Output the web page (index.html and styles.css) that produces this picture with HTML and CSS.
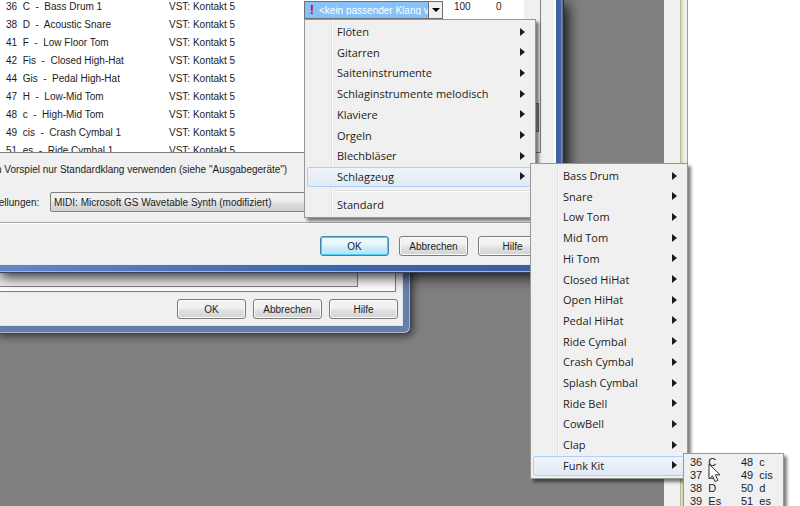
FILE: index.html
```html
<!DOCTYPE html>
<html lang="de">
<head>
	<meta charset="utf-8">
	<title>Klangzuordnung</title>
	<link rel="stylesheet" href="styles.css">
</head>
<body>

	<div class="desktop">

		<div class="side-panel">
			<div class="side-strip"></div>
			<div class="side-page"></div>
		</div>

		<div class="window window-back">
			<div class="window-body">
				<div class="frame-box"><div class="frame-inner"></div></div>
				<div class="buttons buttons-back">
					<button class="btn">OK</button>
					<button class="btn">Abbrechen</button>
					<button class="btn">Hilfe</button>
				</div>
			</div>
		</div>

		<div class="window window-front">
			<div class="window-body">
				<div class="list">
					<div class="list-view">
						<table class="sounds">
							<colgroup>
								<col class="col-name">
								<col class="col-device">
								<col class="col-sound">
								<col class="col-volume">
								<col>
							</colgroup>
							<tr>
								<td class="name">36  C  -  Bass Drum 1</td><td>VST: Kontakt 5</td>
								<td>
									<div class="combo">
										<span class="warn">!</span>
										<select class="combo-select" aria-label="Klang"><option>&lt;kein passender Klang v</option></select>
										<span class="combo-arrow"></span>
									</div>
								</td>
								<td>100</td><td>0</td>
							</tr>
							<tr><td class="name">38  D  -  Acoustic Snare</td><td>VST: Kontakt 5</td></tr>
							<tr><td class="name">41  F  -  Low Floor Tom</td><td>VST: Kontakt 5</td></tr>
							<tr><td class="name">42  Fis  -  Closed High-Hat</td><td>VST: Kontakt 5</td></tr>
							<tr><td class="name">44  Gis  -  Pedal High-Hat</td><td>VST: Kontakt 5</td></tr>
							<tr><td class="name">47  H  -  Low-Mid Tom</td><td>VST: Kontakt 5</td></tr>
							<tr><td class="name">48  c  -  High-Mid Tom</td><td>VST: Kontakt 5</td></tr>
							<tr><td class="name">49  cis  -  Crash Cymbal 1</td><td>VST: Kontakt 5</td></tr>
							<tr><td class="name">51  es  -  Ride Cymbal 1</td><td>VST: Kontakt 5</td></tr>
						</table>
					</div>
					<div class="scrollbar"><div class="thumb"></div></div>
				</div>

				<p class="hint">n Vorspiel nur Standardklang verwenden (siehe "Ausgabegeräte")</p>

				<div class="settings">
					<label for="device">tellungen:</label>
					<select id="device" class="device"><option>MIDI: Microsoft GS Wavetable Synth (modifiziert)</option></select>
				</div>

				<div class="buttons buttons-front">
					<button class="btn btn-default">OK</button>
					<button class="btn">Abbrechen</button>
					<button class="btn">Hilfe</button>
				</div>
			</div>
		</div>

		<div class="menu menu-groups">
			<div class="menu-items">
				<button class="item sub">Flöten</button>
				<button class="item sub">Gitarren</button>
				<button class="item sub">Saiteninstrumente</button>
				<button class="item sub">Schlaginstrumente melodisch</button>
				<button class="item sub">Klaviere</button>
				<button class="item sub">Orgeln</button>
				<button class="item sub">Blechbläser</button>
				<button class="item sub active">Schlagzeug</button>
			</div>
			<hr class="separator">
			<button class="item">Standard</button>
		</div>

		<div class="menu menu-drums">
			<div class="menu-items">
				<button class="item sub">Bass Drum</button>
				<button class="item sub">Snare</button>
				<button class="item sub">Low Tom</button>
				<button class="item sub">Mid Tom</button>
				<button class="item sub">Hi Tom</button>
				<button class="item sub">Closed HiHat</button>
				<button class="item sub">Open HiHat</button>
				<button class="item sub">Pedal HiHat</button>
				<button class="item sub">Ride Cymbal</button>
				<button class="item sub">Crash Cymbal</button>
				<button class="item sub">Splash Cymbal</button>
				<button class="item sub">Ride Bell</button>
				<button class="item sub">CowBell</button>
				<button class="item sub">Clap</button>
				<button class="item sub active">Funk Kit</button>
			</div>
		</div>

		<div class="notes">
			<button class="note">36  C</button>
			<button class="note">48  c</button>
			<button class="note">37  C</button>
			<button class="note">49  cis</button>
			<button class="note">38  D</button>
			<button class="note">50  d</button>
			<button class="note">39  Es</button>
			<button class="note">51  es</button>
		</div>

		<svg class="cursor" width="14" height="21" viewBox="0 0 14 21">
			<path d="M1 1V16L4.5 12.8L7 18.5L9.8 17.3L7.4 11.8H12Z" fill="#fff" stroke="#333" stroke-linejoin="round"/>
		</svg>

	</div>

</body>
</html>
```
FILE: styles.css
```css
*{
	box-sizing: border-box;
}

body{
	margin: 0;
	font-family: "Liberation Sans", Arial, sans-serif;
	font-size: 10px;
	color: #1c1c1c;
}

button, select{
	font: inherit;
	color: inherit;
	appearance: none;
}

.desktop{
	position: relative;
	height: 100vh;
	overflow: hidden;
	background: #808080;
}

/* application behind the dialogs */
.side-panel{
	display: flex;
	height: 100%;
	margin-left: 664px;
	background: #f0f0f0;
}

.side-strip{
	width: 24px;
	background: linear-gradient(90deg, #f0f0f0 0 16px, #b9b99a 16px 17px, #d9d9bb 17px 19px, #eeeee8 19px 23px, #9c9c9c 23px);
}

.side-page{
	flex: 1;
	background: #fff;
}

/* dialogs */
.window{
	position: absolute;
}

.window-body{
	display: flex;
	flex-direction: column;
	background: #f0f0f0;
}

.window-back{
	left: -4px;
	top: 180px;
	width: 415px;
	padding: 0 7px 7px 0;
	border-right: 1px solid #3c4658;
	border-bottom: 1px solid #3c4658;
	border-radius: 0 0 6px 0;
	background: #667ea8;
	box-shadow: inset -1px -1px #a9b8d0, 2px 2px 8px rgba(0,0,0,.6);
}

.window-back .window-body{
	border-right: 1px solid #dfe6f0;
	border-bottom: 1px solid #dfe6f0;
}

.frame-box{
	height: 112px;
	margin-right: 6px;
	border-right: 1px solid #808080;
	border-bottom: 1px solid #808080;
	background: #fff;
}

.frame-inner{
	height: 107px;
	margin-right: 37px;
	border-right: 1px solid #808080;
	border-bottom: 1px solid #808080;
	background: #f0f0f0;
}

.window-front{
	left: -4px;
	top: 0;
	width: 568px;
	padding: 0 8px 7px 0;
	border-bottom: 1px solid #35425a;
	background: linear-gradient(90deg, #6488c4, #3d65ad 60%, #3a5c9c 559px, #4267a4 565px, #93acd2 566px, #263653 567px);
	box-shadow: inset 0 -1px #9fb6d8, 4px 4px 13px rgba(0,0,0,.85);
}

.window-front .window-body{
	border-right: 2px solid #fff;
	border-bottom: 1px solid #e4ecf6;
}

.list{
	display: flex;
	height: 153px;
	margin-right: 13px;
	border-right: 1px solid #808080;
	border-bottom: 1px solid #808080;
}

.list-view{
	flex: 1;
	overflow: hidden;
	background: #fff;
}

.sounds{
	width: 100%;
	margin-top: -2px;
	table-layout: fixed;
	border-collapse: collapse;
}

.sounds td{
	height: 18px;
	padding: 0;
	line-height: 18px;
	vertical-align: top;
}

.sounds .name{
	padding-left: 10px;
	white-space: pre;
}

.col-name{
	width: 173px;
}

.col-device{
	width: 135px;
}

.col-sound{
	width: 150px;
}

.col-volume{
	width: 42px;
}

.scrollbar{
	width: 16px;
	padding: 103px 1px 0;
}

.thumb{
	height: 29px;
	border: 1px solid #707070;
	background: #a8a8a8;
}

.combo{
	display: flex;
	align-items: center;
	width: 139px;
	height: 18px;
	margin: 3px 0 -3px;
	border: 1px solid #707070;
	background: #86c2f7;
	line-height: 16px;
}

.warn{
	width: 14px;
	text-align: center;
	font-size: 13px;
	font-weight: bold;
	color: #b01050;
}

.combo-select{
	flex: 1;
	min-width: 0;
	height: 14px;
	padding: 0 0 2px;
	border: 0;
	background: none;
	color: #fff;
}

.combo-arrow{
	display: flex;
	align-items: center;
	justify-content: center;
	width: 14px;
	height: 16px;
	border-left: 1px solid #707070;
	background: #f0f0f0;
}

.combo-arrow::before{
	content: "";
	border: 4px solid transparent;
	border-top-color: #000;
	border-bottom: 0;
}

.hint{
	margin: 8px 0 0;
	line-height: 18px;
}

.settings{
	display: flex;
	align-items: center;
	gap: 6px;
	margin-top: 13px;
	padding-bottom: 10px;
	border-bottom: 1px solid #a8a8a8;
	box-shadow: 0 1px #fff;
}

.settings label{
	width: 48px;
}

.device{
	width: 300px;
	height: 20px;
	padding: 0 3px;
	border: 1px solid #808080;
	border-radius: 2px;
	background: linear-gradient(#f0f0f0 40%, #dedede 60%, #d0d0d0);
}

.buttons{
	display: flex;
	justify-content: flex-end;
}

.buttons-front{
	gap: 10px;
	padding: 13px 7px 8px 0;
}

.buttons-back{
	gap: 7px;
	padding: 7px 4px 6px 0;
}

.btn{
	width: 69px;
	height: 20px;
	padding: 0;
	border: 1px solid #7c7c7c;
	border-radius: 3px;
	background: linear-gradient(#f2f2f2 40%, #e0e0e0 60%, #d2d2d2);
	box-shadow: inset 0 0 0 1px #fafafa;
}

.btn-default{
	border-color: #3a88ac;
	background: linear-gradient(#eaf7fd 40%, #cdecfa 60%, #b4e0f6);
	box-shadow: inset 0 0 0 1px #4ccdf2;
}

/* popup menus */
.menu{
	position: absolute;
	padding: 2px;
	border: 1px solid #979797;
	background: linear-gradient(90deg, #f0f0f0 26px, #e2e2e2 26px 27px, #fafafa 27px 28px, #f0f0f0 28px);
	box-shadow: 3px 3px 3px rgba(0,0,0,.5);
	font-family: "Open Sans", "Noto Sans", sans-serif;
	font-size: 11px;
}

.menu-groups{
	left: 304px;
	top: 19px;
	width: 232px;
}

.menu-drums{
	left: 530px;
	top: 163px;
	width: 158px;
}

.menu-items{
	display: flex;
	flex-direction: column;
	justify-content: space-between;
}

.menu-groups .menu-items{
	height: 165px;
}

.menu-drums .menu-items{
	height: 310px;
}

.item{
	display: flex;
	align-items: center;
	justify-content: space-between;
	width: 100%;
	height: 20px;
	padding: 0 7px 1px 29px;
	border: 1px solid transparent;
	border-radius: 2px;
	background: none;
	text-align: left;
}

.sub::after{
	content: "";
	border: 4px solid transparent;
	border-left: 5px solid #1c1c1c;
	border-right: 0;
}

.active{
	border-color: #aecff7;
	background: linear-gradient(rgba(240,246,253,.6), rgba(214,230,248,.6));
}

.separator{
	height: 2px;
	margin: 3px 0 3px 27px;
	border: 0;
	border-top: 1px solid #e0e0e0;
	background: #fff;
}

/* note picker, runs on below the screen edge */
.notes{
	position: absolute;
	left: 683px;
	top: 453px;
	display: grid;
	grid-template-columns: 51px 1fr;
	width: 101px;
	padding: 2px 0 2px 6px;
	border: 1px solid #979797;
	background: #f0f0f0;
	box-shadow: 3px 3px 3px rgba(0,0,0,.5);
	font-size: 11px;
}

.note{
	height: 13px;
	padding: 0;
	border: 0;
	background: none;
	line-height: 13px;
	text-align: left;
	white-space: pre;
}

.cursor{
	position: absolute;
	left: 708px;
	top: 463px;
}
```
